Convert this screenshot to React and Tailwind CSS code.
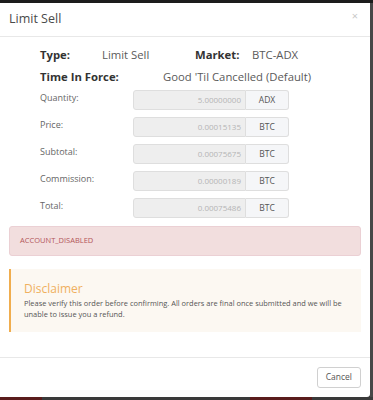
export default function App() {
	const rows = [
		{ label: "Quantity:", value: "5.00000000", unit: "ADX" },
		{ label: "Price:", value: "0.00015135", unit: "BTC" },
		{ label: "Subtotal:", value: "0.00075675", unit: "BTC" },
		{ label: "Commission:", value: "0.00000189", unit: "BTC" },
		{ label: "Total:", value: "0.00075486", unit: "BTC" },
	];

	return (
		<div
			className="w-[373px] h-[400px] bg-[#2e2e2e] flex flex-col overflow-hidden"
			style={{ fontFamily: '"Open Sans", "Liberation Sans", sans-serif' }}
		>
			<div className="h-[3px] bg-[#1c1c1c]" />
			<div className="flex">
				{/* modal */}
				<div className="w-[370px] h-[394px] bg-white rounded-br-[3px] flex flex-col shadow-md">
					<div className="h-[34px] border-b border-[#e8e8e8] flex items-center justify-between pl-[9px] pr-[12px]">
						<h4 className="text-[12.5px] text-[#4a4a4a]">Limit Sell</h4>
						<span className="text-[11px] text-[#c8c8c8] leading-none -mt-[8px]">×</span>
					</div>

					<div className="flex-1 px-[9px] pt-[9px]">
						<div className="pl-[31px] text-[11.3px] text-[#333] leading-[17px]">
							<div className="flex items-center">
								<span className="w-[62px] font-bold">Type:</span>
								<span className="w-[93px] text-[#5a5a5a]">Limit Sell</span>
								<span className="w-[57px] font-bold">Market:</span>
								<span className="text-[#5a5a5a]">BTC-ADX</span>
							</div>
							<div className="flex items-center mt-[5px]">
								<span className="w-[123px] font-bold">Time In Force:</span>
								<span className="text-[#5a5a5a]">Good 'Til Cancelled (Default)</span>
							</div>
						</div>

						<div className="mt-[5px] pl-[31px] flex flex-col gap-[7px]">
							{rows.map((r) => (
								<div key={r.label} className="flex items-start">
									<span className="w-[93px] text-[9px] text-[#666] pt-[1px]">{r.label}</span>
									<div className="flex h-[20px]">
										<div className="w-[113px] bg-[#eeeeee] border border-[#dedede] rounded-l-[3px] text-right pr-[4px] text-[8px] text-[#b5b5b5] leading-[18px]">
											{r.value}
										</div>
										<div className="w-[43px] bg-[#f5f6f8] border border-l-0 border-[#dedede] rounded-r-[3px] text-center text-[8.5px] text-[#555] leading-[18px]">
											{r.unit}
										</div>
									</div>
								</div>
							))}
						</div>

						<div className="mt-[8px] h-[30px] bg-[#f2dede] border border-[#ebd0d4] rounded-[3px] flex items-center pl-[10px] text-[7.5px] text-[#b2565a]">
							ACCOUNT_DISABLED
						</div>

						<div className="mt-[13px] h-[63px] bg-[#fcf8f2] border-l-[2px] border-[#f0ad4e] pl-[13px] pt-[12px]">
							<div className="text-[12px] text-[#f0b060] leading-[16px]">Disclaimer</div>
							<p className="text-[7.45px] text-[#555] leading-[11px] mt-[1px] pr-[10px]">
								Please verify this order before confirming. All orders are final once submitted and we will be unable to issue you a refund.
							</p>
						</div>
					</div>

					<div className="h-[40px] border-t border-[#e8e8e8] flex items-center justify-end pr-[9px]">
						<button className="h-[21px] px-[8px] border border-[#d0d0d0] rounded-[3px] text-[8.5px] text-[#555] bg-white">
							Cancel
						</button>
					</div>
				</div>
				<div className="flex-1 bg-[#474747]" />
			</div>
			<div className="flex h-[3px] bg-[#3a3a3a]">
				<div className="w-[42px] bg-[#5a1c1c]" />
				<div className="w-[208px]" />
				<div className="w-[62px] bg-[#5a1c1c]" />
			</div>
		</div>
	);
}
